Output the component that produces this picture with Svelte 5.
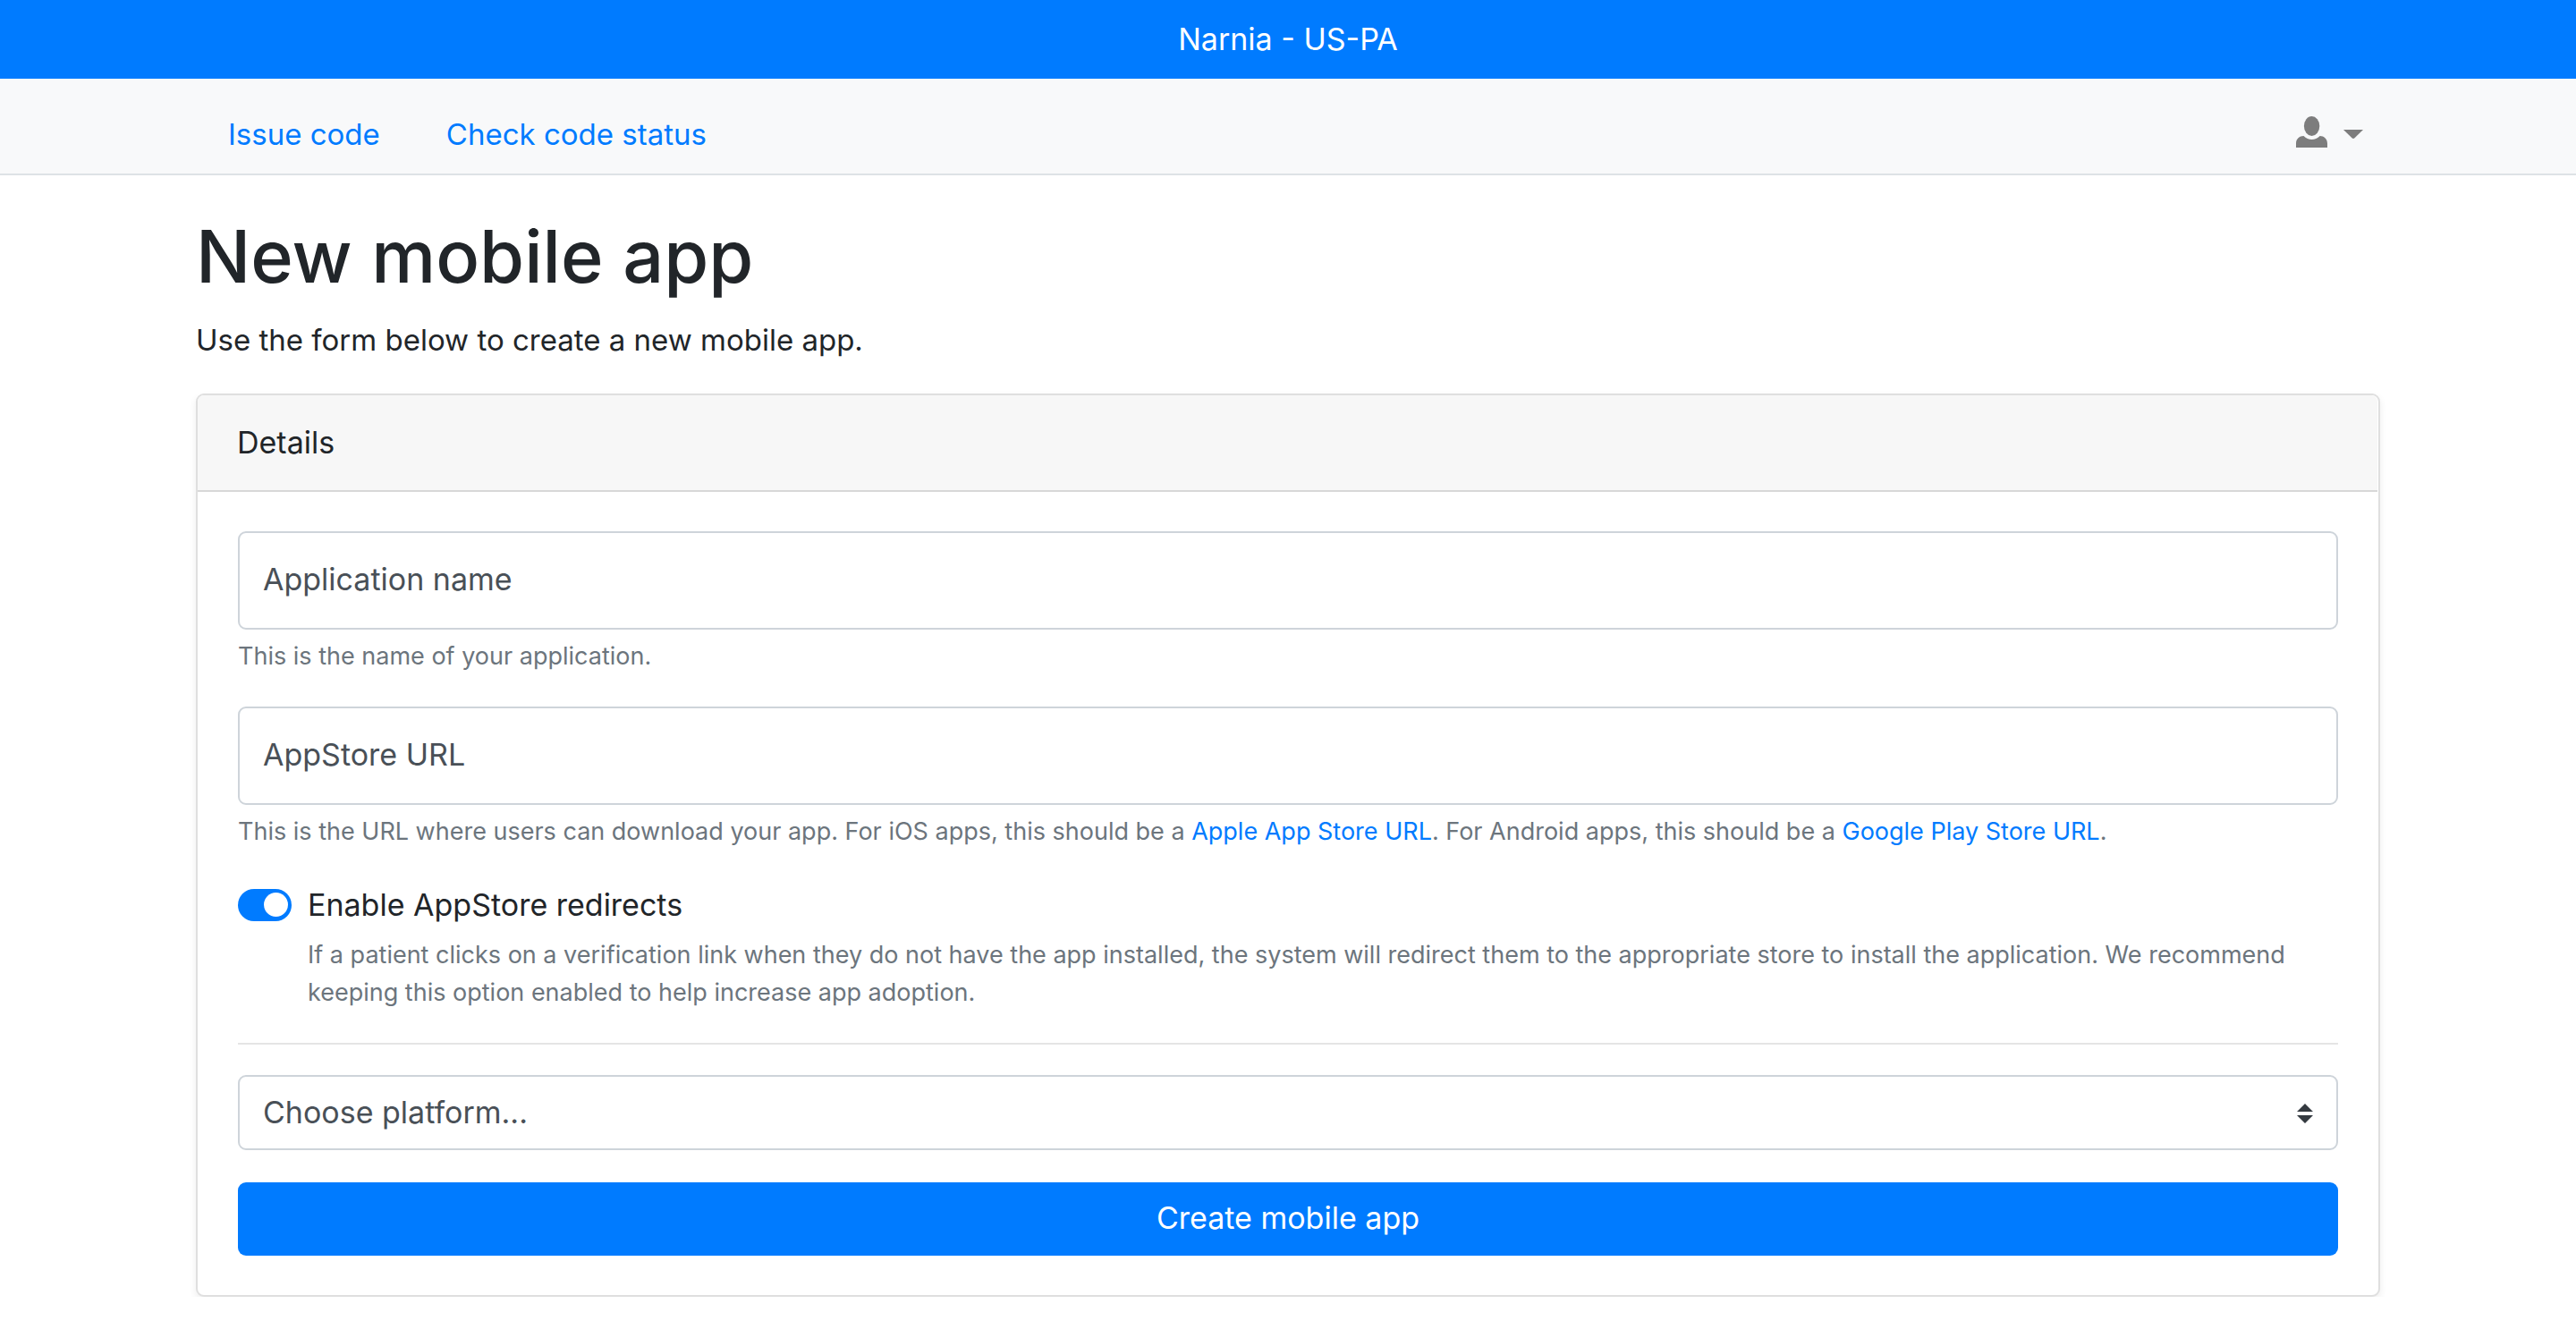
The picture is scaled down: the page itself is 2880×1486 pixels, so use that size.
<script>
  let name = $state('');
  let url = $state('');
  let redirects = $state(true);
  let platform = $state('');
</script>

<div class="realm">Narnia - US-PA</div>

<header class="navbar">
  <div class="container bar">
    <nav>
      <a href="#issue">Issue code</a>
      <a href="#status">Check code status</a>
    </nav>
    <button class="account" type="button" aria-label="Account menu">
      <svg class="person" viewBox="0 0 35 35" aria-hidden="true">
        <ellipse cx="17.6" cy="11" rx="8.7" ry="11" />
        <path d="M0 35v-4.500C0 25 4 22 8.500 22Q12.500 26 17.600 26T26.700 22C31 22 35 25 35 30.500V35z" />
      </svg>
      <svg class="caret" viewBox="0 0 22 10" aria-hidden="true">
        <path d="M0 0h22L12.500 9.300q-1.500 1.400-3 0z" />
      </svg>
    </button>
  </div>
</header>

<main class="container">
  <h1>New mobile app</h1>
  <p class="lead">Use the form below to create a new mobile app.</p>

  <section class="card">
    <div class="card-header">Details</div>
    <form class="card-body" onsubmit={(e) => e.preventDefault()}>
      <div class="group">
        <div class="field">
          <input id="name" type="text" placeholder=" " bind:value={name} />
          <label for="name">Application name</label>
        </div>
        <small>This is the name of your application.</small>
      </div>

      <div class="group">
        <div class="field">
          <input id="url" type="text" placeholder=" " bind:value={url} />
          <label for="url">AppStore URL</label>
        </div>
        <small>
          This is the URL where users can download your app. For iOS apps, this should be a
          <a href="#apple">Apple App Store URL</a>. For Android apps, this should be a
          <a href="#google">Google Play Store URL</a>.
        </small>
      </div>

      <div class="switch">
        <input id="redirects" type="checkbox" role="switch" bind:checked={redirects} />
        <div class="switch-text">
          <label for="redirects">Enable AppStore redirects</label>
          <small>
            If a patient clicks on a verification link when they do not have the app installed, the
            system will redirect them to the appropriate store to install the application. We
            recommend keeping this option enabled to help increase app adoption.
          </small>
        </div>
      </div>

      <hr />

      <div class="select">
        <select aria-label="Platform" bind:value={platform}>
          <option value="">Choose platform...</option>
          <option value="ios">iOS</option>
          <option value="android">Android</option>
        </select>
        <svg viewBox="0 0 18 22" aria-hidden="true">
          <path d="M9 0l9 9H0zM9 22l9-9H0z" />
        </svg>
      </div>

      <button class="submit" type="submit">Create mobile app</button>
    </form>
  </section>
</main>

<style>
  :global(body) {
    margin: 0;
    background: #fff;
    color: #212529;
    font: 400 34px/52px Inter, 'Liberation Sans', sans-serif;
  }

  .container {
    box-sizing: border-box;
    width: 100%;
    max-width: 2442px;
    margin: 0 auto;
  }

  a {
    color: #007bff;
    text-decoration: none;
  }

  .realm {
    padding: 18px;
    background: #007bff;
    color: #fff;
    text-align: center;
  }

  .navbar {
    background: #f8f9fa;
    border-bottom: 2px solid #dee2e6;
  }

  .bar {
    display: flex;
    align-items: center;
    justify-content: space-between;
    padding: 36px 19px 18px 36px;
  }

  nav {
    display: flex;
    gap: 74px;
    font-size: 33px;
  }

  .account {
    display: flex;
    align-items: center;
    gap: 18px;
    padding: 0;
    border: 0;
    background: none;
    fill: #7d7d7d;
  }

  .person {
    width: 35px;
    height: 35px;
    margin-bottom: 5px;
  }

  .caret {
    width: 22px;
    height: 10px;
  }

  h1 {
    margin: 38px 0 14px;
    font-size: 81px;
    font-weight: 500;
    line-height: 106px;
  }

  .lead {
    margin: 0 0 34px;
    font-size: 33px;
  }

  .card {
    border: 2px solid #dfdfdf;
    border-radius: 9px;
    background: #fff;
    box-shadow: 0 4px 8px rgba(0, 0, 0, 0.075);
  }

  .card-header {
    margin-right: 1px;
    padding: 27px 44px;
    border-bottom: 2px solid #d8d8d8;
    border-radius: 7px 7px 0 0;
    background: #f7f7f7;
  }

  .card-body {
    display: flex;
    flex-direction: column;
    padding: 44px 45px;
  }

  small {
    display: block;
    color: #6c757d;
    font-size: 27px;
    line-height: 42px;
  }

  .group {
    margin-bottom: 35px;
  }

  .field,
  .select {
    position: relative;
  }

  .field {
    margin-bottom: 9px;
  }

  .field input,
  select {
    box-sizing: border-box;
    display: block;
    width: 100%;
    padding: 0 26px;
    border: 2px solid #ced4da;
    border-radius: 9px;
    background: #fff;
    color: #495057;
    font: inherit;
  }

  .field input {
    height: 110px;
  }

  .field label {
    position: absolute;
    inset: 0 28px;
    color: #495057;
    line-height: 108px;
    pointer-events: none;
  }

  .field input:not(:placeholder-shown) + label {
    display: none;
  }

  .switch {
    display: flex;
    gap: 18px;
  }

  .switch input {
    flex: none;
    appearance: none;
    display: flex;
    box-sizing: border-box;
    width: 60px;
    height: 36px;
    margin: 8px 0;
    padding: 4px;
    border-radius: 18px;
    background: #adb5bd;
  }

  .switch input::before {
    content: '';
    width: 27px;
    height: 27px;
    border-radius: 50%;
    background: #fff;
  }

  .switch input:checked {
    justify-content: flex-end;
    background: #007bff;
  }

  .switch-text {
    display: flex;
    flex-direction: column;
    gap: 9px;
  }

  hr {
    width: 100%;
    margin: 35px 0 34px;
    border: 0;
    border-top: 2px solid #e5e5e5;
  }

  select {
    appearance: none;
    height: 84px;
  }

  .select svg {
    position: absolute;
    top: 32px;
    right: 28px;
    width: 18px;
    height: 22px;
    fill: #343a40;
    pointer-events: none;
  }

  .submit {
    height: 82px;
    margin-top: 36px;
    padding: 0 26px 2px;
    border: 0;
    border-radius: 9px;
    background: #007bff;
    color: #fff;
    font: inherit;
  }
</style>
